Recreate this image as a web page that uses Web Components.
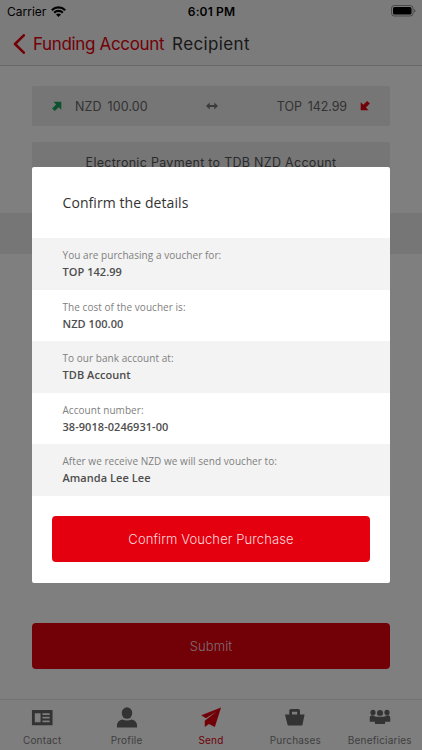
<!DOCTYPE html>
<html lang="en">
<head>
<meta charset="utf-8">
<meta name="viewport" content="width=device-width, initial-scale=1">
<title>Recipient</title>
<style>
  html, body { margin: 0; height: 100%; overflow: hidden; }
  body { background: #fff; font-family: Inter, "Liberation Sans", sans-serif; }
</style>
</head>
<body>
<voucher-app>
  <status-bar slot="top" carrier="Carrier" time="6:01 PM"></status-bar>
  <nav-header slot="top" back="Funding Account" heading="Recipient"></nav-header>
  <rate-bar from="NZD" from-amount="100.00" to="TOP" to-amount="142.99"></rate-bar>
  <payment-option>Electronic Payment to TDB NZD Account</payment-option>
  <section-strip></section-strip>
  <red-button class="submit">Submit</red-button>
  <tab-bar slot="bottom">
    <tab-item icon="contact">Contact</tab-item>
    <tab-item icon="profile">Profile</tab-item>
    <tab-item icon="send" active>Send</tab-item>
    <tab-item icon="basket">Purchases</tab-item>
    <tab-item icon="group">Beneficiaries</tab-item>
  </tab-bar>
  <confirm-dialog slot="overlay" heading="Confirm the details">
    <detail-row label="You are purchasing a voucher for:">TOP 142.99</detail-row>
    <detail-row label="The cost of the voucher is:">NZD 100.00</detail-row>
    <detail-row label="To our bank account at:">TDB Account</detail-row>
    <detail-row label="Account number:">38-9018-0246931-00</detail-row>
    <detail-row label="After we receive NZD we will send voucher to:">Amanda Lee Lee</detail-row>
    <red-button slot="action">Confirm Voucher Purchase</red-button>
  </confirm-dialog>
</voucher-app>

<script>
const ICONS = {
  contact: `<path fill-rule="evenodd" d="M2 4.200h21.500v16H2zM5 7.500v9.400h6V7.500zM13 7.500v1.800h7.500V7.500zM13 11.300v1.800h7.500v-1.800zM13 15.100v1.800h7.500v-1.800z"/>`,
  profile: `<ellipse cx="12.500" cy="7.400" rx="5.500" ry="6"/><path d="M2 22.500v-2.300c0-3.400 2.300-5.400 5.600-6.200 2.800 1.500 7 1.500 9.800 0 3.300.8 5.600 2.800 5.600 6.200v2.300z"/>`,
  send: `<path d="M23 1.500 2.400 9.600 7.200 12.700 18.500 5.600 6 15.400V22l4.300-3.200 6.200 3.200z"/>`,
  basket: `<path fill-rule="evenodd" d="M6.500 8.800V4.800c0-1 .7-1.800 1.800-1.800h7.600c1.100 0 1.800.8 1.800 1.800v4h4.800l-2.200 10.800c-.1.500-.5.800-1 .8H5.700c-.5 0-.9-.3-1-.8L2 8.800zm2.900 0h5.400V5.900H9.400z"/>`,
  group: `<circle cx="5.200" cy="6.700" r="2.700"/><circle cx="12.500" cy="7.200" r="3.100"/><circle cx="19.800" cy="6.700" r="2.700"/><path d="M1.800 16.500v-4.200c0-1.800 1-2.700 2.600-2.700 2 0 2.600 1.700 4.200 1.700h7.800c1.600 0 2.200-1.700 4.200-1.700 1.600 0 2.600.9 2.600 2.700v4.200h-5.400v2.300H7.200v-2.300z"/>`
};

class VoucherApp extends HTMLElement {
  connectedCallback() {
    if (this.shadowRoot) return;
    this.attachShadow({ mode: "open" }).innerHTML = `
      <style>
        :host { display: block; position: relative; height: 750px; }
        .screen { display: flex; flex-direction: column; height: 100%; }
        .top { background: #f7f7f7; height: 65px; border-bottom: 1px solid #d2d2d2; }
        main { flex: 1; display: flex; flex-direction: column; padding-top: 20px; }
        ::slotted(.submit) { margin: auto 32px 30px; }
      </style>
      <div class="screen">
        <div class="top"><slot name="top"></slot></div>
        <main><slot></slot></main>
        <slot name="bottom"></slot>
      </div>
      <slot name="overlay"></slot>
    `;
  }
}

class StatusBar extends HTMLElement {
  connectedCallback() {
    if (this.shadowRoot) return;
    this.attachShadow({ mode: "open" }).innerHTML = `
      <style>
        :host {
          display: grid;
          grid-template-columns: 1fr auto 1fr;
          align-items: center;
          height: 22px;
          padding: 0 6px 0 7px;
          color: #000;
          font-size: 12px;
        }
        .left { display: flex; align-items: center; gap: 5px; letter-spacing: 0; }
        .time { font-weight: 600; letter-spacing: .15px; }
        .battery { justify-self: end; }
        svg { display: block; }
      </style>
      <span class="left">${this.getAttribute("carrier")}
        <svg width="15" height="11" viewBox="0 0 15 11">
          <path d="M.8 4.200a9.500 9.500 0 0 1 13.400 0M3.200 6.700a6.200 6.200 0 0 1 8.600 0" fill="none" stroke="#000" stroke-width="2.200"/>
          <path d="M7.500 11 5 8.600a3.600 3.600 0 0 1 5 0z"/>
        </svg>
      </span>
      <span class="time">${this.getAttribute("time")}</span>
      <svg class="battery" width="25" height="12" viewBox="0 0 25 12">
        <rect x=".5" y=".5" width="21.500" height="10.500" rx="2.800" fill="none" stroke="#000" stroke-opacity=".4"/>
        <rect x="2" y="2" width="18.500" height="7.500" rx="1.500"/>
        <path d="M23.300 4v3.600c1.500-.5 1.500-3.100 0-3.600z" opacity=".5"/>
      </svg>
    `;
  }
}

class NavHeader extends HTMLElement {
  connectedCallback() {
    if (this.shadowRoot) return;
    this.attachShadow({ mode: "open" }).innerHTML = `
      <style>
        :host { display: flex; align-items: center; height: 43px; padding-left: 13px; }
        svg { margin-right: 8px; }
        .back { color: #e4000f; font-size: 17px; letter-spacing: -.35px; }
        .title { margin-left: 8px; color: #333; font-size: 17px; letter-spacing: .38px; }
        span { white-space: nowrap; }
      </style>
      <svg width="12" height="20" viewBox="0 0 12 20">
        <path d="M10.800 1.300 2 10l8.800 8.700" fill="none" stroke="#e4000f" stroke-width="2.600" stroke-linecap="round" stroke-linejoin="round"/>
      </svg>
      <span class="back">${this.getAttribute("back")}</span>
      <span class="title">${this.getAttribute("heading")}</span>
    `;
  }
}

class RateBar extends HTMLElement {
  connectedCallback() {
    if (this.shadowRoot) return;
    const attr = (name) => this.getAttribute(name);
    this.attachShadow({ mode: "open" }).innerHTML = `
      <style>
        :host {
          display: flex;
          align-items: center;
          height: 40px;
          margin: 0 32px;
          padding: 0 20px;
          box-sizing: border-box;
          background: #ededed;
          border-radius: 2px;
          color: #666;
          font-size: 12.500px;
        }
        .pair { display: flex; gap: 6px; }
        .from { margin-left: 13px; letter-spacing: .1px; }
        .to { margin-right: 13px; letter-spacing: -.1px; }
        .swap { margin: 0 auto; }
      </style>
      <svg width="10" height="10" viewBox="0 0 10 10">
        <path d="M1.500.8H9.300v7.900L6.700 6.200 2.800 9.900.1 7.400 4.100 3.600z" fill="#1aa35c"/>
      </svg>
      <span class="pair from"><span>${attr("from")}</span><span>${attr("from-amount")}</span></span>
      <svg class="swap" width="12" height="8" viewBox="0 0 12 8">
        <path d="M0 4 3.700.5v2.500h4.600V.5L12 4 8.300 7.500V5H3.700v2.500z" fill="#777"/>
      </svg>
      <span class="pair to"><span>${attr("to")}</span><span>${attr("to-amount")}</span></span>
      <svg width="10" height="10" viewBox="0 0 10 10">
        <path d="M8.500 9.200H.7V1.300L3.300 3.800 7.200.1 9.900 2.600 5.900 6.400z" fill="#e4000f"/>
      </svg>
    `;
  }
}

class PaymentOption extends HTMLElement {
  connectedCallback() {
    if (this.shadowRoot) return;
    this.attachShadow({ mode: "open" }).innerHTML = `
      <style>
        :host {
          display: flex;
          align-items: center;
          justify-content: center;
          height: 40px;
          margin: 16px 32px 0;
          background: #ededed;
          border-radius: 2px;
          color: #555;
          font-size: 12.500px;
          letter-spacing: .29px;
        }
      </style>
      <slot></slot>
    `;
  }
}

class SectionStrip extends HTMLElement {
  connectedCallback() {
    if (this.shadowRoot) return;
    this.attachShadow({ mode: "open" }).innerHTML = `
      <style>:host { display: block; height: 41px; margin-top: 31px; background: #ededed; }</style>
    `;
  }
}

class RedButton extends HTMLElement {
  connectedCallback() {
    if (this.shadowRoot) return;
    this.attachShadow({ mode: "open" }).innerHTML = `
      <style>
        :host { display: block; }
        button {
          display: block;
          width: 100%;
          height: 46px;
          padding: 0;
          border: 0;
          border-radius: 4px;
          background: #e4000f;
          color: #ffd9dc;
          font: 300 13px Inter, "Liberation Sans", sans-serif;
          letter-spacing: var(--button-tracking, .1px);
        }
      </style>
      <button><slot></slot></button>
    `;
  }
}

class TabBar extends HTMLElement {
  connectedCallback() {
    if (this.shadowRoot) return;
    this.attachShadow({ mode: "open" }).innerHTML = `
      <style>
        :host {
          display: grid;
          grid-template-columns: repeat(5, 1fr);
          height: 50px;
          border-top: 1px solid #e6e6e6;
          background: #fcfcfc;
        }
      </style>
      <slot></slot>
    `;
  }
}

class TabItem extends HTMLElement {
  connectedCallback() {
    if (this.shadowRoot) return;
    this.attachShadow({ mode: "open" }).innerHTML = `
      <style>
        :host {
          display: flex;
          flex-direction: column;
          align-items: center;
          padding-top: 6px;
          color: #808080;
          font-size: 10px;
          line-height: 12px;
          letter-spacing: .2px;
          white-space: nowrap;
        }
        :host([active]) { color: #e4000f; }
        svg { display: block; margin-bottom: 5px; fill: #666; }
        :host([active]) svg { fill: #e4000f; }
      </style>
      <svg width="24" height="23" viewBox="0 0 25 24">${ICONS[this.getAttribute("icon")]}</svg>
      <span><slot></slot></span>
    `;
  }
}

class ConfirmDialog extends HTMLElement {
  connectedCallback() {
    if (this.shadowRoot) return;
    this.attachShadow({ mode: "open" }).innerHTML = `
      <style>
        :host {
          position: absolute;
          inset: 0;
          display: grid;
          place-items: center;
          background: rgba(0, 0, 0, .5);
        }
        section {
          width: 358px;
          height: 416px;
          background: #fff;
          border-radius: 2px;
          overflow: hidden;
        }
        h2 {
          margin: 0;
          padding-left: 30.500px;
          height: 71px;
          color: #333;
          font: 400 14px/71px "Open Sans", "Noto Sans", sans-serif;
          letter-spacing: .08px;
        }
        .action { padding: 20px 20px 0; }
      </style>
      <section>
        <h2>${this.getAttribute("heading")}</h2>
        <slot></slot>
        <div class="action"><slot name="action"></slot></div>
      </section>
    `;
  }
}

class DetailRow extends HTMLElement {
  connectedCallback() {
    if (this.shadowRoot) return;
    this.attachShadow({ mode: "open" }).innerHTML = `
      <style>
        :host {
          display: block;
          height: 51.600px;
          padding: 9px 30.500px 0;
          box-sizing: border-box;
          font-family: "Open Sans", "Noto Sans", sans-serif;
        }
        :host(:nth-of-type(odd)) { background: #f3f3f3; }
        .label { color: #808080; font-size: 10px; line-height: 17px; letter-spacing: .05px; }
        .value { color: #4d4d4d; font-size: 11px; line-height: 16px; font-weight: 600; letter-spacing: .05px; }
      </style>
      <div class="label">${this.getAttribute("label")}</div>
      <div class="value"><slot></slot></div>
    `;
  }
}

customElements.define("voucher-app", VoucherApp);
customElements.define("status-bar", StatusBar);
customElements.define("nav-header", NavHeader);
customElements.define("rate-bar", RateBar);
customElements.define("payment-option", PaymentOption);
customElements.define("section-strip", SectionStrip);
customElements.define("red-button", RedButton);
customElements.define("tab-bar", TabBar);
customElements.define("tab-item", TabItem);
customElements.define("confirm-dialog", ConfirmDialog);
customElements.define("detail-row", DetailRow);
</script>
</body>
</html>
